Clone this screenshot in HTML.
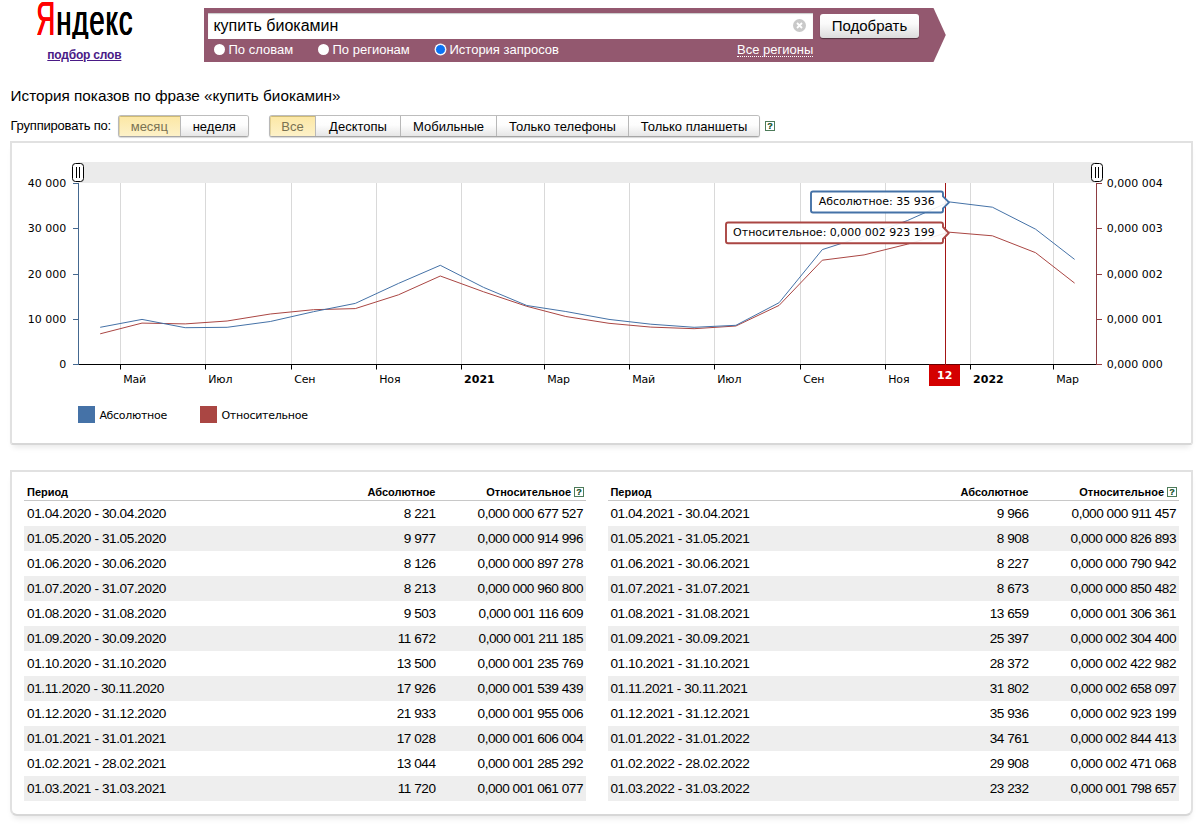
<!DOCTYPE html>
<html lang="ru"><head><meta charset="utf-8"><title>Яндекс — подбор слов</title>
<style>
html,body{margin:0;padding:0;background:#fff}
body{width:1199px;height:830px;position:relative;overflow:hidden;font-family:"Liberation Sans",Arial,sans-serif;color:#000;font-size:13px}
.abs{position:absolute}
.logo{position:absolute;left:37px;top:0;width:110px;height:39px;overflow:hidden}
.logo span{position:absolute;left:-1px;top:-7px;font-size:42.6px;line-height:52px;white-space:nowrap;transform-origin:0 0;transform:scaleX(.64);letter-spacing:1.6px;text-shadow:.6px 0 0 currentColor,1.2px 0 0 currentColor;color:#000}
.logo b{font-weight:normal;color:#f00;font-size:47.2px;letter-spacing:0;display:inline-block;transform-origin:0 100%;transform:scaleX(.86);margin-right:-2.8px}
.sub{position:absolute;left:47.3px;top:47.8px;font-size:12px;letter-spacing:-.2px;font-weight:bold;color:#4a1a86;text-decoration:underline;line-height:14px;white-space:nowrap}
.bar{position:absolute;left:0;top:0}
.inp{position:absolute;left:208px;top:13px;width:605px;height:26px;background:#fff;box-sizing:border-box;padding-left:5.4px;font-size:16px;line-height:25.5px;white-space:nowrap;box-shadow:inset 0 1px 1px rgba(0,0,0,.22)}
.clr{position:absolute;left:793px;top:19px;width:13px;height:13px}
.btn{position:absolute;left:820px;top:14px;width:99px;height:24px;box-sizing:border-box;border-radius:3px;background:linear-gradient(#fff,#fafafa 40%,#dcdcdc);box-shadow:0 1px 1px rgba(0,0,0,.45);font-size:15px;line-height:23px;text-align:center}
.rad{position:absolute;top:44px;width:11px;height:11px;border-radius:50%;background:#fff;box-sizing:border-box}
.rad.on{border:1.8px solid #fff;background:#0a72f5;box-shadow:0 0 0 .4px #fff}
.rl{position:absolute;margin-left:-.5px;top:42px;color:#fff;font-size:13px;line-height:15px;white-space:nowrap}
.reg{position:absolute;left:737px;top:42px;color:#fff;font-size:13px;line-height:15px;white-space:nowrap;border-bottom:1px dotted #fff;padding-bottom:0;height:14px}
.title{position:absolute;left:10.5px;top:87px;font-size:15.3px;line-height:18px;white-space:nowrap}
.grp{position:absolute;left:10.5px;top:117.6px;font-size:13px;line-height:15px;letter-spacing:-.2px;white-space:nowrap}
.seg{position:absolute;top:115px;height:22px;box-sizing:border-box;border:1px solid;border-color:#bdbdbd #b8b8b8 #a6a6a6;border-radius:3px;display:flex;box-shadow:0 1px 1px rgba(0,0,0,.16);overflow:hidden;background:#fff}
.seg span{display:block;box-sizing:border-box;height:20px;line-height:21px;text-align:center;font-size:13px;border-left:1px solid #b8b8b8;background:linear-gradient(#fff,#fdfdfd 45%,#e6e6e6);white-space:nowrap}
.seg span:first-child{border-left:0}
.seg span.on{background:linear-gradient(#fce7a4,#fdf1c8);color:#7a7252;box-shadow:inset 0 1px 0 rgba(150,130,60,.45),inset 1px 0 0 rgba(150,130,60,.25)}
.hlp{display:inline-block;box-sizing:border-box;width:10px;height:10px;border:1px solid #4d7b5a;color:#2f5f3e;font:bold 9px/8.4px "Liberation Sans",Arial,sans-serif;text-shadow:0 0 .4px #2f5f3e;text-align:center;vertical-align:1px;margin-left:3px;background:#fff;letter-spacing:0}
.box{position:absolute;box-sizing:border-box;border:2px solid #e1e1e1;border-bottom-color:#d7d7d7;background:#fff;box-shadow:0 5px 6px -3px rgba(0,0,0,.10);border-radius:0 0 3px 3px}
.chart{position:absolute;left:0;top:0}
.tbl{position:absolute;top:482px;border-collapse:collapse;table-layout:fixed}
.tbl th{height:17px;font-size:11px;font-weight:bold;line-height:14px;vertical-align:bottom;padding:0 3px 1px;border-bottom:1px solid #c8c8c8;white-space:nowrap}
.tbl td{height:25px;line-height:25px;font-size:13.6px;padding:0 3px;white-space:nowrap;letter-spacing:-.4px}
.tbl .p{text-align:left}
.t2 .p{padding-left:2.4px!important}
.tbl .a,.tbl .r{text-align:right}
.tbl td.a,.tbl td.r{letter-spacing:-.47px}
.tbl th.r{padding-right:2px}
.tbl tr.odd td{background:#eeeeee}
</style></head><body>
<div class="logo"><span><b>Я</b>ндекс</span></div>
<div class="sub">подбор слов</div>
<svg class="bar" width="1199" height="70" viewBox="0 0 1199 70"><polygon points="204,8 933.5,8 945.8,35 933.5,62 204,62" fill="#93586f"/></svg>
<div class="inp">купить биокамин</div>
<svg class="clr" viewBox="0 0 13 13"><circle cx="6.5" cy="6.5" r="6.5" fill="#c9c9c9"/><path d="M4 4 L9 9 M9 4 L4 9" stroke="#fff" stroke-width="1.8" fill="none"/></svg>
<div class="btn">Подобрать</div>
<div class="rad" style="left:214px"></div><div class="rl" style="left:229px">По словам</div>
<div class="rad" style="left:318px"></div><div class="rl" style="left:333px">По регионам</div>
<div class="rad on" style="left:435px"></div><div class="rl" style="left:450px">История запросов</div>
<div class="reg">Все регионы</div>
<div class="title">История показов по фразе «купить биокамин»</div>
<div class="grp">Группировать по:</div>
<div class="seg" style="left:118px;width:131px"><span class="on" style="width:61px">месяц</span><span style="width:69px">неделя</span></div>
<div class="seg" style="left:269px;width:491px"><span class="on" style="width:45px">Все</span><span style="width:85px">Десктопы</span><span style="width:96px">Мобильные</span><span style="width:132px">Только телефоны</span><span style="width:131px">Только планшеты</span></div>
<span class="hlp abs" style="left:765px;top:121px;margin:0">?</span>
<div class="box" style="left:10px;top:141px;width:1183px;height:304px"></div>
<svg class="chart" width="1199" height="830" viewBox="0 0 1199 830" font-family="'DejaVu Sans',Verdana,sans-serif" font-size="11" fill="#000">
<rect x="78" y="162" width="1019" height="21" fill="#ebebeb"/>
<line x1="120.5" y1="183" x2="120.5" y2="364" stroke="#d9d9d9" stroke-width="1"/>
<line x1="120.5" y1="364" x2="120.5" y2="369.5" stroke="#000" stroke-width="1"/>
<text x="123.2" y="383" letter-spacing="-0.15">Май</text>
<line x1="205.5" y1="183" x2="205.5" y2="364" stroke="#d9d9d9" stroke-width="1"/>
<line x1="205.5" y1="364" x2="205.5" y2="369.5" stroke="#000" stroke-width="1"/>
<text x="208.2" y="383" letter-spacing="-0.15">Июл</text>
<line x1="291.5" y1="183" x2="291.5" y2="364" stroke="#d9d9d9" stroke-width="1"/>
<line x1="291.5" y1="364" x2="291.5" y2="369.5" stroke="#000" stroke-width="1"/>
<text x="294.2" y="383" letter-spacing="-0.15">Сен</text>
<line x1="376.5" y1="183" x2="376.5" y2="364" stroke="#d9d9d9" stroke-width="1"/>
<line x1="376.5" y1="364" x2="376.5" y2="369.5" stroke="#000" stroke-width="1"/>
<text x="379.2" y="383" letter-spacing="-0.15">Ноя</text>
<line x1="461.5" y1="183" x2="461.5" y2="364" stroke="#d9d9d9" stroke-width="1"/>
<line x1="461.5" y1="364" x2="461.5" y2="369.5" stroke="#000" stroke-width="1"/>
<text x="464.1" y="383" font-weight="bold">2021</text>
<line x1="544.5" y1="183" x2="544.5" y2="364" stroke="#d9d9d9" stroke-width="1"/>
<line x1="544.5" y1="364" x2="544.5" y2="369.5" stroke="#000" stroke-width="1"/>
<text x="547.2" y="383" letter-spacing="-0.15">Мар</text>
<line x1="629.5" y1="183" x2="629.5" y2="364" stroke="#d9d9d9" stroke-width="1"/>
<line x1="629.5" y1="364" x2="629.5" y2="369.5" stroke="#000" stroke-width="1"/>
<text x="632.2" y="383" letter-spacing="-0.15">Май</text>
<line x1="714.5" y1="183" x2="714.5" y2="364" stroke="#d9d9d9" stroke-width="1"/>
<line x1="714.5" y1="364" x2="714.5" y2="369.5" stroke="#000" stroke-width="1"/>
<text x="717.2" y="383" letter-spacing="-0.15">Июл</text>
<line x1="800.5" y1="183" x2="800.5" y2="364" stroke="#d9d9d9" stroke-width="1"/>
<line x1="800.5" y1="364" x2="800.5" y2="369.5" stroke="#000" stroke-width="1"/>
<text x="803.2" y="383" letter-spacing="-0.15">Сен</text>
<line x1="885.5" y1="183" x2="885.5" y2="364" stroke="#d9d9d9" stroke-width="1"/>
<line x1="885.5" y1="364" x2="885.5" y2="369.5" stroke="#000" stroke-width="1"/>
<text x="888.2" y="383" letter-spacing="-0.15">Ноя</text>
<line x1="970.5" y1="183" x2="970.5" y2="364" stroke="#d9d9d9" stroke-width="1"/>
<line x1="970.5" y1="364" x2="970.5" y2="369.5" stroke="#000" stroke-width="1"/>
<text x="973.1" y="383" font-weight="bold">2022</text>
<line x1="1053.5" y1="183" x2="1053.5" y2="364" stroke="#d9d9d9" stroke-width="1"/>
<line x1="1053.5" y1="364" x2="1053.5" y2="369.5" stroke="#000" stroke-width="1"/>
<text x="1056.2" y="383" letter-spacing="-0.15">Мар</text>
<polyline points="100.2,333.8 142.0,323.1 185.2,323.9 227.1,321.0 270.3,314.0 313.5,309.7 355.3,308.6 398.5,294.8 440.3,276.0 483.6,291.8 526.8,306.3 565.8,316.5 609.0,323.3 650.8,327.1 694.1,328.7 735.9,326.0 779.1,305.4 822.3,260.2 864.1,254.9 907.3,244.2 949.2,232.2 992.4,235.8 1035.6,252.7 1074.6,283.1" fill="none" stroke="#AA4643" stroke-width="1"/>
<polyline points="100.2,327.3 142.0,319.4 185.2,327.7 227.1,327.3 270.3,321.5 313.5,311.7 355.3,303.4 398.5,283.4 440.3,265.3 483.6,287.4 526.8,305.5 565.8,311.5 609.0,319.4 650.8,324.2 694.1,327.3 735.9,325.3 779.1,302.7 822.3,249.6 864.1,236.1 907.3,220.6 949.2,201.9 992.4,207.2 1035.6,229.2 1074.6,259.4" fill="none" stroke="#4572A7" stroke-width="1"/>
<line x1="78" y1="364.5" x2="1097" y2="364.5" stroke="#000" stroke-width="1"/>
<line x1="78.5" y1="183" x2="78.5" y2="365" stroke="#446890" stroke-width="1"/>
<line x1="1096.5" y1="183" x2="1096.5" y2="365" stroke="#8e3d42" stroke-width="1"/>
<line x1="73" y1="364.5" x2="78" y2="364.5" stroke="#446890" stroke-width="1"/>
<text x="66.2" y="368.0" text-anchor="end">0</text>
<line x1="73" y1="319.5" x2="78" y2="319.5" stroke="#446890" stroke-width="1"/>
<text x="66.2" y="323.0" text-anchor="end">10 000</text>
<line x1="73" y1="274.5" x2="78" y2="274.5" stroke="#446890" stroke-width="1"/>
<text x="66.2" y="278.0" text-anchor="end">20 000</text>
<line x1="73" y1="228.5" x2="78" y2="228.5" stroke="#446890" stroke-width="1"/>
<text x="66.2" y="232.0" text-anchor="end">30 000</text>
<line x1="73" y1="183.5" x2="78" y2="183.5" stroke="#446890" stroke-width="1"/>
<text x="66.2" y="187.0" text-anchor="end">40 000</text>
<line x1="1097" y1="364.5" x2="1102" y2="364.5" stroke="#8e3d42" stroke-width="1"/>
<text x="1106.8" y="368.0">0,000 000</text>
<line x1="1097" y1="319.5" x2="1102" y2="319.5" stroke="#8e3d42" stroke-width="1"/>
<text x="1106.8" y="323.0">0,000 001</text>
<line x1="1097" y1="274.5" x2="1102" y2="274.5" stroke="#8e3d42" stroke-width="1"/>
<text x="1106.8" y="278.0">0,000 002</text>
<line x1="1097" y1="228.5" x2="1102" y2="228.5" stroke="#8e3d42" stroke-width="1"/>
<text x="1106.8" y="232.0">0,000 003</text>
<line x1="1097" y1="183.5" x2="1102" y2="183.5" stroke="#8e3d42" stroke-width="1"/>
<text x="1106.8" y="187.0">0,000 004</text>
<rect x="72.5" y="163.5" width="11" height="18" rx="3" ry="3" fill="#fff" stroke="#000" stroke-width="1"/>
<line x1="76.5" y1="167" x2="76.5" y2="178" stroke="#000" stroke-width="1"/>
<line x1="79.5" y1="167" x2="79.5" y2="178" stroke="#000" stroke-width="1"/>
<rect x="1091.5" y="163.5" width="11" height="18" rx="3" ry="3" fill="#fff" stroke="#000" stroke-width="1"/>
<line x1="1095.5" y1="167" x2="1095.5" y2="178" stroke="#000" stroke-width="1"/>
<line x1="1098.5" y1="167" x2="1098.5" y2="178" stroke="#000" stroke-width="1"/>
<line x1="945.5" y1="183" x2="945.5" y2="365" stroke="#a31515" stroke-width="1"/>
<rect x="929" y="364.5" width="31" height="21.5" fill="#d40000"/>
<text x="944.7" y="379.4" text-anchor="middle" font-weight="bold" fill="#fff">12</text>
<path d="M813,191.5 L941,191.5 Q943,191.5 943,193.5 L943,196.4 L949,202.4 L943,208.4 L943,210.5 Q943,212.5 941,212.5 L813,212.5 Q811,212.5 811,210.5 L811,193.5 Q811,191.5 813,191.5 Z" fill="#fff" fill-opacity="0.9" stroke="#4572A7" stroke-width="1.9" stroke-linejoin="round"/><text x="934.8" y="205.4" text-anchor="end">Абсолютное: 35 936</text>
<path d="M728,222.5 L941,222.5 Q943,222.5 943,224.5 L943,227 L948.8,233 L943,239 L943,241.3 Q943,243.3 941,243.3 L728,243.3 Q726,243.3 726,241.3 L726,224.5 Q726,222.5 728,222.5 Z" fill="#fff" fill-opacity="0.9" stroke="#AA4643" stroke-width="1.9" stroke-linejoin="round"/><text x="934.8" y="236.3" text-anchor="end">Относительное: 0,000 002 923 199</text>
<rect x="78" y="406" width="17" height="17" fill="#4572A7"/>
<text x="99.4" y="418.5" letter-spacing="-0.3">Абсолютное</text>
<rect x="200" y="406" width="17" height="17" fill="#AA4643"/>
<text x="221.4" y="418.5" letter-spacing="-0.25">Относительное</text>
</svg>
<div class="box" style="left:10px;top:470px;width:1183px;height:346px;border-radius:0 0 7px 7px"></div>
<table class="tbl t1" style="left:24px;width:562px" cellspacing="0" cellpadding="0"><colgroup><col><col style="width:110px"><col style="width:147.5px"></colgroup><thead><tr><th class="p">Период</th><th class="a">Абсолютное</th><th class="r">Относительное<span class="hlp">?</span></th></tr></thead><tbody>
<tr class="even"><td class="p">01.04.2020 - 30.04.2020</td><td class="a">8 221</td><td class="r">0,000 000 677 527</td></tr>
<tr class="odd"><td class="p">01.05.2020 - 31.05.2020</td><td class="a">9 977</td><td class="r">0,000 000 914 996</td></tr>
<tr class="even"><td class="p">01.06.2020 - 30.06.2020</td><td class="a">8 126</td><td class="r">0,000 000 897 278</td></tr>
<tr class="odd"><td class="p">01.07.2020 - 31.07.2020</td><td class="a">8 213</td><td class="r">0,000 000 960 800</td></tr>
<tr class="even"><td class="p">01.08.2020 - 31.08.2020</td><td class="a">9 503</td><td class="r">0,000 001 116 609</td></tr>
<tr class="odd"><td class="p">01.09.2020 - 30.09.2020</td><td class="a">11 672</td><td class="r">0,000 001 211 185</td></tr>
<tr class="even"><td class="p">01.10.2020 - 31.10.2020</td><td class="a">13 500</td><td class="r">0,000 001 235 769</td></tr>
<tr class="odd"><td class="p">01.11.2020 - 30.11.2020</td><td class="a">17 926</td><td class="r">0,000 001 539 439</td></tr>
<tr class="even"><td class="p">01.12.2020 - 31.12.2020</td><td class="a">21 933</td><td class="r">0,000 001 955 006</td></tr>
<tr class="odd"><td class="p">01.01.2021 - 31.01.2021</td><td class="a">17 028</td><td class="r">0,000 001 606 004</td></tr>
<tr class="even"><td class="p">01.02.2021 - 28.02.2021</td><td class="a">13 044</td><td class="r">0,000 001 285 292</td></tr>
<tr class="odd"><td class="p">01.03.2021 - 31.03.2021</td><td class="a">11 720</td><td class="r">0,000 001 061 077</td></tr>
</tbody></table>
<table class="tbl t2" style="left:608px;width:571px" cellspacing="0" cellpadding="0"><colgroup><col><col style="width:110px"><col style="width:147.5px"></colgroup><thead><tr><th class="p">Период</th><th class="a">Абсолютное</th><th class="r">Относительное<span class="hlp">?</span></th></tr></thead><tbody>
<tr class="even"><td class="p">01.04.2021 - 30.04.2021</td><td class="a">9 966</td><td class="r">0,000 000 911 457</td></tr>
<tr class="odd"><td class="p">01.05.2021 - 31.05.2021</td><td class="a">8 908</td><td class="r">0,000 000 826 893</td></tr>
<tr class="even"><td class="p">01.06.2021 - 30.06.2021</td><td class="a">8 227</td><td class="r">0,000 000 790 942</td></tr>
<tr class="odd"><td class="p">01.07.2021 - 31.07.2021</td><td class="a">8 673</td><td class="r">0,000 000 850 482</td></tr>
<tr class="even"><td class="p">01.08.2021 - 31.08.2021</td><td class="a">13 659</td><td class="r">0,000 001 306 361</td></tr>
<tr class="odd"><td class="p">01.09.2021 - 30.09.2021</td><td class="a">25 397</td><td class="r">0,000 002 304 400</td></tr>
<tr class="even"><td class="p">01.10.2021 - 31.10.2021</td><td class="a">28 372</td><td class="r">0,000 002 422 982</td></tr>
<tr class="odd"><td class="p">01.11.2021 - 30.11.2021</td><td class="a">31 802</td><td class="r">0,000 002 658 097</td></tr>
<tr class="even"><td class="p">01.12.2021 - 31.12.2021</td><td class="a">35 936</td><td class="r">0,000 002 923 199</td></tr>
<tr class="odd"><td class="p">01.01.2022 - 31.01.2022</td><td class="a">34 761</td><td class="r">0,000 002 844 413</td></tr>
<tr class="even"><td class="p">01.02.2022 - 28.02.2022</td><td class="a">29 908</td><td class="r">0,000 002 471 068</td></tr>
<tr class="odd"><td class="p">01.03.2022 - 31.03.2022</td><td class="a">23 232</td><td class="r">0,000 001 798 657</td></tr>
</tbody></table>
</body></html>
